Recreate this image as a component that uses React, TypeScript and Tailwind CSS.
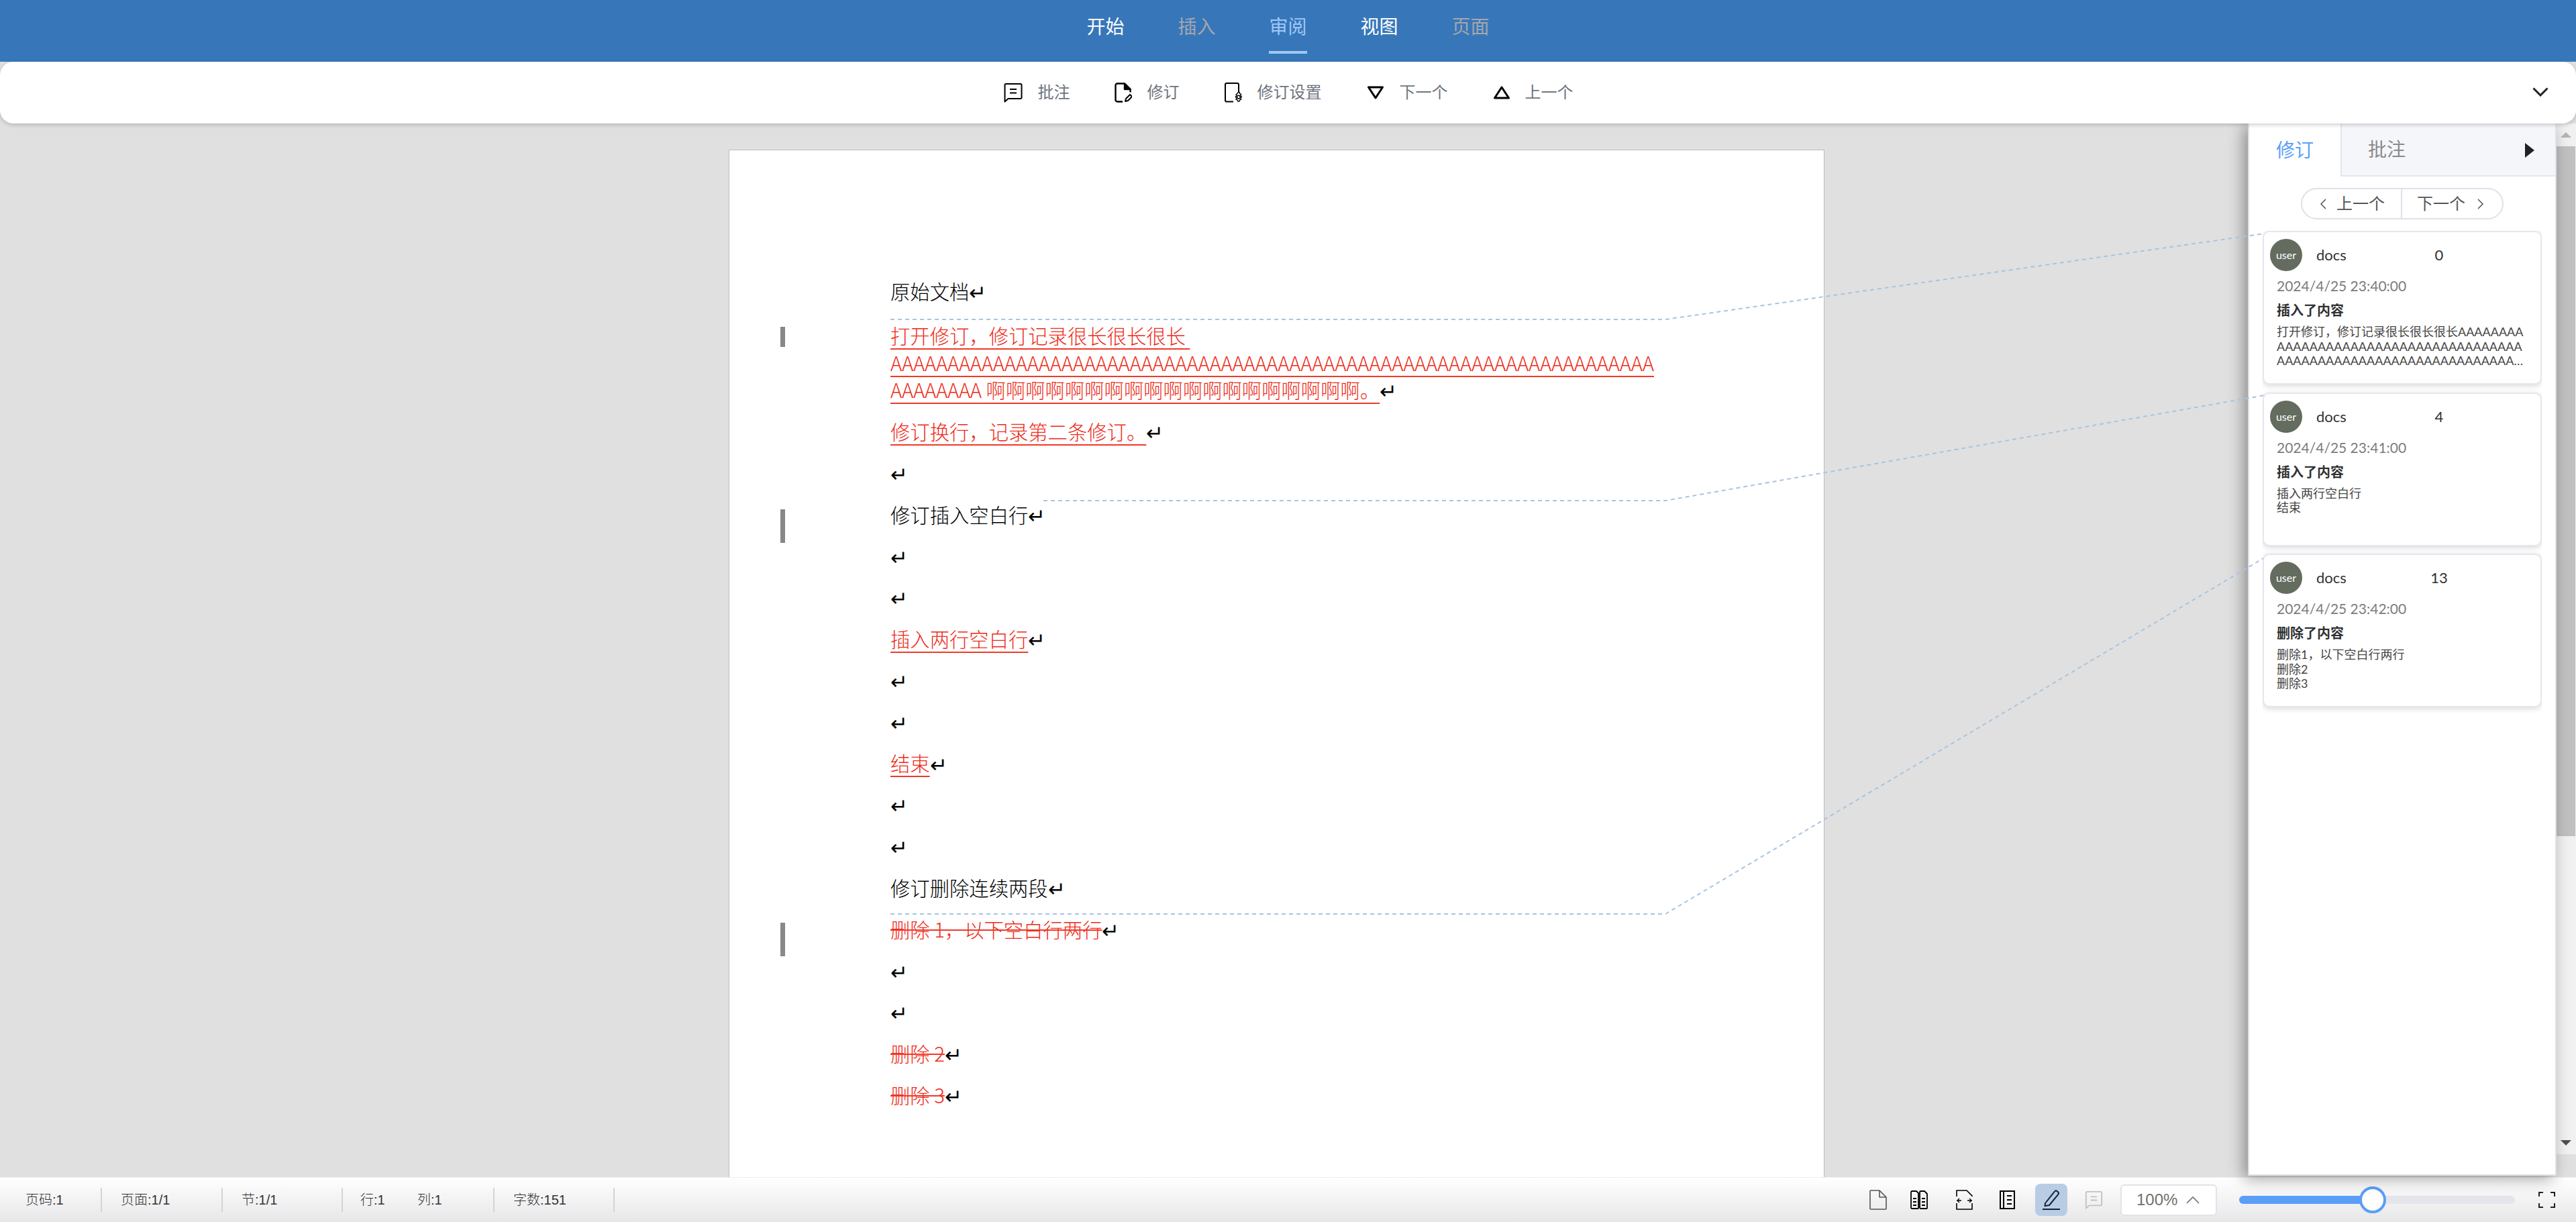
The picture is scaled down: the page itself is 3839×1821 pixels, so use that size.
import React from 'react';

const CJK = "font-['Liberation_Sans','Noto_Sans_CJK_SC',sans-serif]";

const tabs = [
  { label: '开始', cls: 'text-white' },
  { label: '插入', cls: 'text-[#a3a6ad]' },
  { label: '审阅', cls: 'text-[#a0c8f7] active' },
  { label: '视图', cls: 'text-white' },
  { label: '页面', cls: 'text-[#a3a6ad]' },
];

const IconComment = ({ className = '' }: { className?: string }) => (
  <svg viewBox="0 0 28 30" fill="none" stroke="currentColor" strokeWidth="2" className={className}>
    <path d="M3 2h22a1.5 1.5 0 0 1 1.5 1.5v19a1.5 1.5 0 0 1-1.5 1.5H6.5L1.5 28.5V3.5A1.5 1.5 0 0 1 3 2z" strokeLinejoin="round" />
    <path d="M9 10h10M9 15.5h10" />
  </svg>
);

const IconRevise = () => (
  <svg viewBox="0 0 26 30" fill="none" stroke="#000" strokeWidth="2.4" className="w-[26px] h-[30px]">
    <path d="M15 1.500H4a2.500 2.500 0 0 0-2.500 2.500v22A2.500 2.500 0 0 0 4 28.500h8" />
    <path d="M15 1.500l8.500 8.500v4.500" />
    <path d="M15 1.500V10h8.500z" fill="#000" strokeLinejoin="round" />
    <path d="M16 28l1-4 6-6 3 3-6 6z" strokeWidth="2" strokeLinejoin="round" />
  </svg>
);

const IconReviseSetting = () => (
  <svg viewBox="0 0 28 30" fill="none" stroke="#000" className="w-[28px] h-[30px]">
    <path d="M13 28.5H3a2 2 0 0 1-2-2V3a2 2 0 0 1 2-2h16a2 2 0 0 1 2 2v11" strokeWidth="2" />
    <path d="M20 14.5l2.2 0 .6 2.2 1.9 1-1 2 1.8 1.6-1.8 1.7 1 2-2 .9-.7 2.1h-2.2l-.8-2.1-2-.9 1-2-1.8-1.7 1.8-1.6-1-2 2-1z" strokeWidth="1.4" strokeLinejoin="round" />
    <circle cx="20.9" cy="21.6" r="2.4" strokeWidth="1.4" />
  </svg>
);

const IconNext = () => (
  <svg viewBox="0 0 26 20" fill="none" stroke="#000" strokeWidth="3" className="w-[26px] h-[20px]">
    <path d="M2.5 2h21L13 18z" strokeLinejoin="round" />
  </svg>
);

const IconPrev = () => (
  <svg viewBox="0 0 26 20" fill="none" stroke="#000" strokeWidth="3" className="w-[26px] h-[20px]">
    <path d="M2.5 18h21L13 2z" strokeLinejoin="round" />
  </svg>
);

const ToolBtn = ({ icon, label, mr, gap }: { icon: React.ReactNode; label: string; mr: string; gap: string }) => (
  <div className={`flex items-center ${mr} ${gap}`}>
    {icon}
    <span className="text-[24px] leading-none text-[#6f7480]">{label}</span>
  </div>
);

type CardProps = { num: string; time: string; title: string; lines: string[]; clamp?: boolean };

const Card = ({ num, time, title, lines, clamp }: CardProps) => (
  <div className="h-[229px] rounded-[10px] border-2 border-[#e6e6ee] bg-white shadow-[0_2px_8px_rgba(0,0,0,0.16)] pt-[10px] pl-[9px] pr-[18px]">
    <div className="flex items-center">
      <div className="w-12 h-12 rounded-full bg-[#646b5f] flex items-center justify-center text-white text-[16px] font-['Lato',sans-serif]">user</div>
      <span className="w-[153px] ml-[21px] text-[22px] leading-none text-[#303133] font-['Lato',sans-serif]">docs</span>
      <span className="w-[60px] text-center text-[22px] leading-none text-[#303133] font-['Lato',sans-serif]">{num}</span>
    </div>
    <div className="ml-[10px] mt-[12px] text-[21px] leading-[20px] text-[#7c7c7c] font-['Lato',sans-serif]">{time}</div>
    <div className="ml-[10px] mt-[16px] text-[20px] leading-[20px] font-bold text-[#303133] font-['Noto_Sans_CJK_SC',sans-serif]">{title}</div>
    <div className={`ml-[10px] mt-[12px] text-[18px] leading-[21.6px] text-[#444] font-['Lato','Noto_Sans_CJK_SC',sans-serif] ${clamp ? 'break-all line-clamp-3' : ''}`}>
      {lines.map((l) => (
        <div key={l} className={clamp ? 'inline' : ''}>{l}</div>
      ))}
    </div>
  </div>
);

const RET = () => <span className="text-[31px] font-light text-black leading-none">↵</span>;

const Row = ({ children, cls = '' }: { children?: React.ReactNode; cls?: string }) => (
  <div className={`h-[61.8px] flex items-center text-[29.33px] font-light leading-none whitespace-pre text-black ${cls}`}>{children}</div>
);

const Ins = ({ children }: { children: React.ReactNode }) => (
  <span className="text-[#ee2a18] underline decoration-[#f03a28] decoration-2 underline-offset-[7px]">{children}</span>
);

const Del = ({ children }: { children: React.ReactNode }) => (
  <span className="text-[#ee2a18] line-through decoration-[#f03a28] decoration-2">{children}</span>
);

export default function App() {
  return (
    <div className={`relative w-[3839px] h-[1821px] overflow-hidden flex flex-col bg-[#e0e0e0] ${CJK}`}>
      {/* top tabs */}
      <header className="h-[92px] shrink-0 bg-[#3777b9] flex items-start justify-center gap-[80px]">
        {tabs.map((t) => (
          <div key={t.label} className={`relative h-[80px] flex items-start pt-[25px] text-[28px] leading-[32px] ${t.cls}`}>
            {t.label}
            {t.label === '审阅' && <div className="absolute left-0 right-0 bottom-0 h-1 bg-[#a0c8f7]" />}
          </div>
        ))}
      </header>

      {/* ribbon */}
      <div className="relative z-30 h-[92px] shrink-0 rounded-[20px] bg-white shadow-[0_2px_6px_rgba(0,0,0,0.2)] flex items-center justify-center pl-[1px]">
        <ToolBtn icon={<IconComment className="w-[28px] h-[30px] text-black" />} label="批注" mr="mr-[66px]" gap="gap-[23px]" />
        <ToolBtn icon={<IconRevise />} label="修订" mr="mr-[67px]" gap="gap-[23px]" />
        <ToolBtn icon={<IconReviseSetting />} label="修订设置" mr="mr-[67px]" gap="gap-[21px]" />
        <ToolBtn icon={<IconNext />} label="下一个" mr="mr-[67px]" gap="gap-[23px]" />
        <ToolBtn icon={<IconPrev />} label="上一个" mr="mr-0" gap="gap-[22px]" />
        <svg viewBox="0 0 24 14" fill="none" stroke="#1f2329" strokeWidth="3" className="absolute right-[41px] top-[38px] w-[24px] h-[14px]">
          <path d="M1.5 1.5L12 12 22.5 1.5" />
        </svg>
      </div>

      {/* main */}
      <main className="flex-1 min-h-0 flex">
        <div className="flex-1 min-w-0 overflow-hidden pt-[39px] pl-[1086px]">
          <div className="relative w-[1633px] h-[1531px] bg-white border-x border-t border-[#bdbdbd] pl-[240px] pt-[179px] font-['Noto_Sans_CJK_SC',sans-serif]">
            <Row><span>原始文档</span><RET /></Row>
            <div className="h-[147px] text-[29.33px] font-light leading-none whitespace-pre pt-[14px]">
              <div className="h-[42px] flex items-center"><Ins>打开修订，修订记录很长很长很长 </Ins></div>
              <div className="h-[40px] flex items-center"><Ins>{'A'.repeat(67)}</Ins></div>
              <div className="h-[40px] flex items-center"><Ins>{'A'.repeat(8)} 啊啊啊啊啊啊啊啊啊啊啊啊啊啊啊啊啊啊啊。</Ins><RET /></div>
            </div>
            <Row><Ins>修订换行，记录第二条修订。</Ins><RET /></Row>
            <Row><RET /></Row>
            <Row><span>修订插入空白行</span><RET /></Row>
            <Row><RET /></Row>
            <Row><RET /></Row>
            <Row><Ins>插入两行空白行</Ins><RET /></Row>
            <Row><RET /></Row>
            <Row><RET /></Row>
            <Row><Ins>结束</Ins><RET /></Row>
            <Row><RET /></Row>
            <Row><RET /></Row>
            <Row><span>修订删除连续两段</span><RET /></Row>
            <Row><Del>删除 1，以下空白行两行</Del><RET /></Row>
            <Row><RET /></Row>
            <Row><RET /></Row>
            <Row><Del>删除 2</Del><RET /></Row>
            <Row><Del>删除 3</Del><RET /></Row>
            {/* revision marks in the margin */}
            <div className="absolute left-[76px] top-[263px] w-[7px] h-[30px] bg-[#888]" />
            <div className="absolute left-[76px] top-[535px] w-[7px] h-[50px] bg-[#888]" />
            <div className="absolute left-[76px] top-[1151px] w-[7px] h-[50px] bg-[#888]" />
          </div>
        </div>

        {/* revision panel */}
        <aside className="relative z-20 w-[460px] shrink-0 h-[1568px] border-x-2 border-b-2 border-[#e0e0ea] bg-white shadow-[-6px_4px_22px_rgba(0,0,0,0.38)]">
          <div className="h-[79px] flex border-b-2 border-[#e4e6ee]">
            <div className="w-[138px] -mb-[2px] pt-[2px] bg-white border-r-2 border-[#e4e6ee] flex items-center pl-[40px] text-[28px] text-[#5b9ef8]">修订</div>
            <div className="flex-1 pt-[2px] bg-[#f5f6fa] flex items-center pl-[39px] text-[28px] text-[#8a8a8a]">
              批注
              <div className="ml-[178px] w-0 h-0 border-y-[11px] border-y-transparent border-l-[14px] border-l-[#1f2329]" />
            </div>
          </div>
          <div className="mx-auto mt-[17px] w-[302px] h-[47px] rounded-full border-2 border-[#e0e0ea] flex text-[24px] text-[#555]">
            <div className="w-[149px] border-r-2 border-[#e0e0ea] flex items-center pl-[26px] gap-[15px]">
              <svg viewBox="0 0 10 16" fill="none" stroke="#555" strokeWidth="1.5" className="w-[10px] h-[16px]"><path d="M9 1L2 8l7 7" /></svg>
              上一个
            </div>
            <div className="flex-1 flex items-center pl-[22px] gap-[18px]">
              下一个
              <svg viewBox="0 0 10 16" fill="none" stroke="#555" strokeWidth="1.5" className="w-[10px] h-[16px]"><path d="M1 1l7 7-7 7" /></svg>
            </div>
          </div>
          <div className="mt-[17px] mx-[20px] overflow-hidden flex flex-col gap-[11.5px] pb-[10px]">
            <Card num="0" time="2024/4/25 23:40:00" title="插入了内容" clamp lines={['打开修订，修订记录很长很长很长', 'A'.repeat(120)]} />
            <Card num="4" time="2024/4/25 23:41:00" title="插入了内容" lines={['插入两行空白行', '结束']} />
            <Card num="13" time="2024/4/25 23:42:00" title="删除了内容" lines={['删除1，以下空白行两行', '删除2', '删除3']} />
          </div>
        </aside>

        {/* scrollbar */}
        <div className="relative z-10 w-[29px] shrink-0 h-[1536px] bg-[#f1f1f1] flex flex-col items-center pr-[1px]">
          <div className="h-[34px] shrink-0 flex items-center justify-center">
            <div className="w-0 h-0 border-x-[8px] border-x-transparent border-b-[8px] border-b-[#b5b5b5]" />
          </div>
          <div className="w-full h-[1028px] bg-[#c0c0c0]" />
          <div className="mt-auto h-[34px] flex items-center justify-center">
            <div className="w-0 h-0 border-x-[8px] border-x-transparent border-t-[8px] border-t-[#505050]" />
          </div>
        </div>
      </main>

      {/* status bar */}
      <footer className="relative z-10 h-[67px] shrink-0 bg-gradient-to-b from-white to-[#e7e7e9] border-t border-[#ececec] flex items-center text-[20px] font-light text-[#333]">
        <div className="w-[152px] h-[36px] flex items-center pl-[38px] border-r-2 border-[#d4d4d4]">页码:1</div>
        <div className="w-[180px] h-[36px] flex items-center pl-[28px] border-r-2 border-[#d4d4d4]">页面:1/1</div>
        <div className="w-[179px] h-[36px] flex items-center pl-[28px] border-r-2 border-[#d4d4d4]">节:1/1</div>
        <div className="w-[226px] h-[36px] flex items-center pl-[26px] border-r-2 border-[#d4d4d4]">
          <span className="w-[85px]">行:1</span>
          <span>列:1</span>
        </div>
        <div className="w-[179px] h-[36px] flex items-center pl-[28px] border-r-2 border-[#d4d4d4]">字数:151</div>

        <div className="absolute left-[2786px] top-0 h-full flex items-center">
          <svg viewBox="0 0 26 30" fill="none" stroke="#555" strokeWidth="1.6" className="w-[26px] h-[30px]">
            <path d="M1 2a1 1 0 0 1 1-1h13l10 10v17a1 1 0 0 1-1 1H2a1 1 0 0 1-1-1zM15 1v10h10" strokeLinejoin="round" />
          </svg>
          <svg viewBox="0 0 26 28" fill="none" stroke="#000" strokeWidth="1.8" className="ml-[35px] w-[26px] h-[28px]">
            <path d="M1 2.5a1.5 1.5 0 0 1 1.5-1.5H9l3 3v22a1 1 0 0 1-1 1H2.5A1.5 1.5 0 0 1 1 25.500zM14 2.500a1.500 1.500 0 0 1 1.500-1.500H21l4 4v21a1 1 0 0 1-1 1h-8.500a1.500 1.500 0 0 1-1.500-1.500z" strokeLinejoin="round" />
            <path d="M4 12h5M4 17h5M4 22h5M17 12h5M17 17h5M17 22h5" />
          </svg>
          <svg viewBox="0 0 25 30" fill="none" stroke="#000" strokeWidth="1.600" className="ml-[42px] w-[25px] h-[30px]">
            <path d="M1 10V1h15l8 8v1M1 20v9h23v-9" />
            <path d="M1 16h7M5 13l-3 3 3 3M24 16h-7M20 13l3 3-3 3" strokeWidth="1.300" />
          </svg>
          <svg viewBox="0 0 23 28" fill="none" stroke="#000" strokeWidth="2" className="ml-[40px] w-[23px] h-[28px]">
            <rect x="1" y="1" width="21" height="26" />
            <path d="M6 1v26" />
            <path d="M11 8h7M11 14h7M11 20h7" />
          </svg>
          <div className="ml-[30px] w-[48px] h-[48px] rounded-[8px] bg-[#b8cde3] flex items-center justify-center">
            <svg viewBox="0 0 28 32" fill="none" stroke="#10243c" strokeWidth="2" className="w-[28px] h-[32px]">
              <path d="M5 21L19 3.500a2.500 2.500 0 0 1 3.500-.500l1.500 1.300a2.500 2.500 0 0 1 .300 3.500L11 24l-6.500 1z" strokeLinejoin="round" />
              <path d="M1 30h26" />
            </svg>
          </div>
          <IconComment className="ml-[26px] w-[27px] h-[28px] text-[#c2c2c2]" />
          <div className="ml-[26px] w-[144px] h-[47px] rounded-[6px] border-2 border-[#e3e3ea] bg-white flex items-center pl-[22px] text-[24px] text-[#707070]">
            100%
            <svg viewBox="0 0 20 12" fill="none" stroke="#707070" strokeWidth="1.600" className="ml-[13px] w-[20px] h-[12px]"><path d="M1 11l9-9 9 9" /></svg>
          </div>
          <div className="relative ml-[33px] w-[411px] h-[12px] rounded-full bg-[#e4e6ec]">
            <div className="h-full w-[195px] rounded-full bg-[#5b9ef8]" />
            <div className="absolute left-[179px] top-[-14px] w-[40px] h-[40px] rounded-full border-[4px] border-[#5b9ef8] bg-white" />
          </div>
          <svg viewBox="0 0 25 24" fill="none" stroke="#222" strokeWidth="2" className="ml-[35px] w-[25px] h-[24px]">
            <path d="M1 7V1h6M18 1h6v6M24 17v6h-6M7 23H1v-6" />
          </svg>
        </div>
      </footer>

      {/* connectors from the revisions to the cards */}
      <svg viewBox="0 0 3839 1821" className="absolute inset-0 z-40 w-[3839px] h-[1821px] pointer-events-none" fill="none" stroke="#a8c4e0" strokeWidth="2" strokeDasharray="6 5">
        <path d="M1327 476H2482L3375 348" />
        <path d="M1555 746H2482L3375 589" />
        <path d="M1327 1362H2482L3373 832" />
      </svg>
    </div>
  );
}
